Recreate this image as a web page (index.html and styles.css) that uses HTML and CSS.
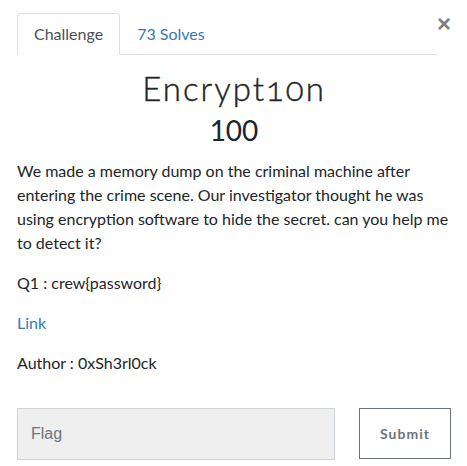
FILE: index.html
```html
<!DOCTYPE html>
<html>
<head>
<meta charset="utf-8">
<link rel="stylesheet" href="styles.css">
</head>
<body>
<div class="modal">
  <div class="header">
    <ul class="tabs">
      <li class="tab active">Challenge</li>
      <li class="tab link">73 Solves</li>
    </ul>
    <span class="close">&times;</span>
  </div>
  <h3 class="title">Encrypt10n</h3>
  <h4 class="points">100</h4>
  <div class="desc">
    <p>We made a memory dump on the criminal machine after entering the crime scene. Our investigator thought he was using encryption software to hide the secret. can you help me to detect it?</p>
    <p>Q1 : crew{password}</p>
    <p><a class="alink" href="#">Link</a></p>
    <p>Author : 0xSh3rl0ck</p>
  </div>
  <form class="submit-row">
    <input class="flag" type="text" placeholder="Flag">
    <button class="btn" type="button">Submit</button>
  </form>
</div>
</body>
</html>
```
FILE: styles.css
```css
* { box-sizing: border-box; }
html, body { margin: 0; padding: 0; background: #fff; }
body {
  font-family: Lato, "Noto Sans", sans-serif;
  font-size: 16px;
  line-height: 1.5;
  color: #212529;
}
.modal {
  width: 467px;
  padding: 13px 16px 0 17px;
}
.header {
  display: flex;
  align-items: flex-start;
}
.tabs {
  flex: 1;
  display: flex;
  list-style: none;
  margin: 0;
  padding: 0;
  border-bottom: 1px solid #dee2e6;
}
.tab {
  padding: 8px 16px;
  border: 1px solid transparent;
  border-radius: 4px 4px 0 0;
  margin-bottom: -1px;
}
.tab.active {
  border-color: #dee2e6 #dee2e6 #fff;
  color: #495057;
  background: #fff;
}
.tab.link { color: #337ab7; }
.close {
  font-family: "Liberation Sans", Arial, sans-serif;
  font-size: 24px;
  font-weight: 700;
  line-height: 1;
  color: #000;
  opacity: .5;
  margin: -1px 0 0 0;
  width: 14px;
  text-align: right;
}
.title {
  margin: 13px 0 0;
  text-align: center;
  font-family: Lato, sans-serif;
  font-weight: 300;
  font-size: 33px;
  line-height: 40px;
  letter-spacing: 2px;
  font-variant-numeric: oldstyle-nums;
  -webkit-text-stroke: 0.4px #212529;
}
.points {
  margin: 5px 0 0;
  text-align: center;
  font-weight: 400;
  font-size: 28px;
  line-height: 34px;
}
.desc { margin-top: 12px; }
.desc p { margin: 0 0 16px; }
.alink { color: #337ab7; text-decoration: none; }
.submit-row {
  display: flex;
  align-items: flex-start;
  gap: 24px;
  margin-top: 33px;
}
.flag {
  width: 318px;
  height: 52px;
  padding: 0 13px;
  background: #efefef;
  border: 1px solid #ced4da;
  border-radius: 0;
  font-family: "Liberation Sans", Arial, sans-serif;
  font-size: 16px;
  color: #495057;
}
.flag::placeholder { color: #6c757d; }
.btn {
  width: 92px;
  height: 51px;
  background: #fff;
  border: 1px solid #6c757d;
  border-radius: 0;
  color: #6c757d;
  font-family: Lato, sans-serif;
  font-weight: 700;
  font-size: 14px;
  letter-spacing: 1px;
}
```
